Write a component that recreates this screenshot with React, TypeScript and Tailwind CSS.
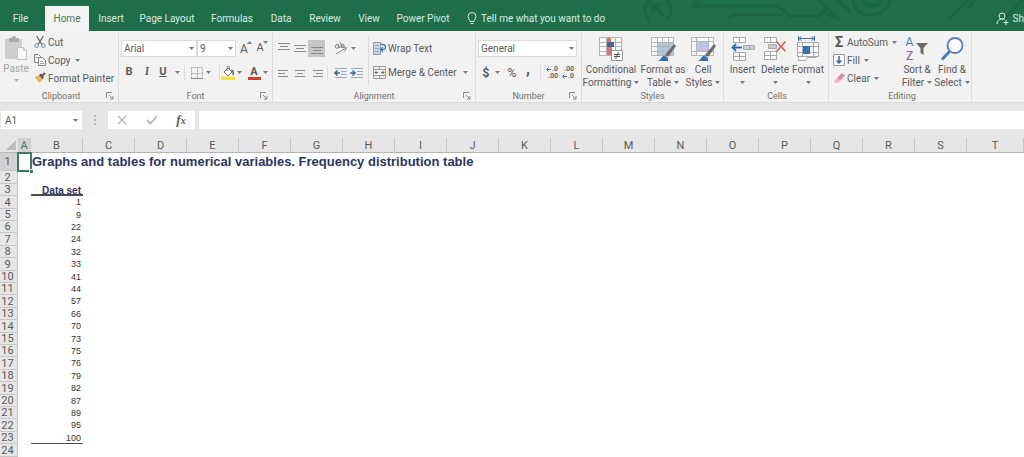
import type { ReactNode } from "react";

const TABS = [
  { name: "File", width: "w-[45px] pr-1" },
  { name: "Home", width: "w-11" },
  { name: "Insert", width: "w-11" },
  { name: "Page Layout", width: "w-[68px]" },
  { name: "Formulas", width: "w-[62px]" },
  { name: "Data", width: "w-9" },
  { name: "Review", width: "w-[52px]" },
  { name: "View", width: "w-9" },
  { name: "Power Pivot", width: "w-[72px]" },
];

const COLUMNS = "ABCDEFGHIJKLMNOPQRST".split("");
const DATA_SET = [1, 9, 22, 24, 32, 33, 41, 44, 57, 66, 70, 73, 75, 76, 79, 82, 87, 89, 95, 100];
const TITLE = "Graphs and tables for numerical variables. Frequency distribution table";

function Caret({ className = "" }: { className?: string }) {
  return (
    <svg viewBox="0 0 5 3" className={`h-[3px] w-[5px] shrink-0 ${className}`} aria-hidden="true">
      <path d="M0 0h5L2.5 3z" fill="#777" />
    </svg>
  );
}

function Divider({ className = "h-4" }: { className?: string }) {
  return <span className={`w-px shrink-0 bg-[#dcdcdc] ${className}`} />;
}

function Group({
  label,
  width,
  launcher = false,
  children,
}: {
  label: string;
  width: string;
  launcher?: boolean;
  children: ReactNode;
}) {
  return (
    <section
      aria-label={label}
      className={`relative flex h-full shrink-0 flex-col border-r border-[#dcdcdc] ${width}`}
    >
      <div className="flex min-h-0 flex-1">{children}</div>
      <div className="h-3 text-center text-[9px] leading-3 text-[#707070]">{label}</div>
      {launcher && (
        <button aria-label={`${label} settings`} className="absolute right-1 bottom-[2px]">
          <svg viewBox="0 0 8 8" className="h-2 w-2" fill="none" stroke="#8a8a8a">
            <path d="M.5 6V.5H6M3 3l4 4M7 4v3H4" />
          </svg>
        </button>
      )}
    </section>
  );
}

function IconButton({ label, children, className = "w-4" }: { label: string; children: ReactNode; className?: string }) {
  return (
    <button aria-label={label} className={`flex h-[17px] shrink-0 items-center justify-center ${className}`}>
      {children}
    </button>
  );
}

function Lines({ d }: { d: string }) {
  return (
    <svg viewBox="0 0 12 12" className="h-3 w-3" stroke="#8a8a8a">
      <path d={d} />
    </svg>
  );
}

function LargeButton({ icon, lines, width }: { icon: ReactNode; lines: string[]; width: string }) {
  return (
    <button className={`flex shrink-0 flex-col items-center pt-[2px] text-[10px] leading-[13px] whitespace-nowrap ${width}`}>
      <span className="flex h-7 items-center">{icon}</span>
      <span>{lines[0]}</span>
      <span className="flex h-[13px] items-center gap-[3px]">
        {lines[1]}
        <Caret />
      </span>
    </button>
  );
}

function SmallButton({ icon, label, caret = false }: { icon: ReactNode; label: string; caret?: boolean }) {
  return (
    <button className="flex h-[18px] items-center gap-[2px] text-[10px] whitespace-nowrap">
      <span className="flex w-3 justify-center">{icon}</span>
      {label}
      {caret && <Caret className="ml-[2px]" />}
    </button>
  );
}

function PasteIcon() {
  return (
    <svg viewBox="0 0 24 26" className="h-[26px] w-6">
      <path d="M1 4h17v20H1z" fill="#cfcdd0" />
      <path d="M5 7V3h3a2 2 0 0 1 4 0h3v4z" fill="#aaa" />
      <path d="M13.5 12.5h6l3 3v9h-9z" fill="#f7f7f7" stroke="#c4c4c4" />
      <path d="M19.5 12.5v3h3" fill="none" stroke="#c4c4c4" />
    </svg>
  );
}

function ScissorsIcon() {
  return (
    <svg viewBox="0 0 12 12" className="h-3 w-3" fill="none">
      <path d="M2.5 0 8 8.5M9.5 0 4 8.5" stroke="#666" strokeWidth="1.3" />
      <circle cx="2.7" cy="9.6" r="1.8" stroke="#5c8ba8" />
      <circle cx="9.3" cy="9.6" r="1.8" stroke="#5c8ba8" />
    </svg>
  );
}

function CopyIcon() {
  return (
    <svg viewBox="0 0 12 12" className="h-3 w-3" fill="#f7f7f7" stroke="#808080">
      <path d="M.5.5h4l2 2v6h-6z" />
      <path d="M4.5 3.5h4l3 3v5h-7z" />
      <path d="M6 7.5h3M6 9.5h4M2 3.5h2" stroke="#8fa6bd" />
    </svg>
  );
}

function BrushIcon() {
  return (
    <svg viewBox="0 0 12 12" className="h-3 w-3">
      <path d="M1 5 6 3l3 4-4 4z" fill="#e8b45a" />
      <path d="m5 3 2-1.5 3 4L8.5 7z" fill="#555" />
      <path d="m8 4 3-3" stroke="#555" strokeWidth="2" />
    </svg>
  );
}

function BordersIcon() {
  return (
    <svg viewBox="0 0 12 12" className="h-3 w-3" fill="none">
      <path d="M.5.5h11v11H.5zM6.5.5v11M.5 6.5h11" stroke="#aaa" strokeDasharray="2 1" />
      <path d="M0 11.5h12" stroke="#888" />
    </svg>
  );
}

function FillColorIcon() {
  return (
    <svg viewBox="0 0 14 14" className="h-[14px] w-[14px]">
      <path d="m3 6 4-4 4 4-4 4z" fill="#fff" stroke="#777" />
      <path d="M6 5V1.5a1.2 1.2 0 0 1 2.4 0V4" fill="none" stroke="#777" />
      <path d="M10.5 4c2 1 2 3 1.5 5" fill="none" stroke="#4f6f8f" strokeWidth="1.6" />
      <path d="M0 10.5h14V14H0z" fill="#f2e343" />
    </svg>
  );
}

function FontSizeIcon({ down = false }: { down?: boolean }) {
  return (
    <span className={`relative text-[#5a5a5a] ${down ? "text-[11px]" : "text-[12px]"}`}>
      A
      <svg viewBox="0 0 5 3" className="absolute top-px -right-1 h-[3px] w-[5px]" fill="#667f99">
        <path d={down ? "M0 0h5L2.5 3z" : "M0 3h5L2.5 0z"} />
      </svg>
    </span>
  );
}

function OrientationIcon() {
  return (
    <svg viewBox="0 0 14 13" className="h-[13px] w-[14px]" fill="none" stroke="#777">
      <circle cx="3" cy="4.5" r="1.8" />
      <path d="m3.500 2 2.500 4M6 .5l3 5" />
      <circle cx="8.500" cy="4" r="1.700" />
      <path d="M2 12 12 6M8.5 5.5l4 .2-2 3.800" stroke="#8a8a8a" />
    </svg>
  );
}

function IndentIcon({ increase = false }: { increase?: boolean }) {
  return (
    <svg viewBox="0 0 13 12" className="h-3 w-[13px]" fill="none">
      <path d="M1 1.5h12M7 4.5h6M7 7.5h6M1 10.5h12" stroke="#9ab" />
      <path
        d={increase ? "M0 6h5M2.5 3.5 5 6 2.5 8.5" : "M6 6H1M3.5 3.5 1 6l2.5 2.5"}
        stroke="#3b6ea5"
        strokeWidth="1.6"
      />
    </svg>
  );
}

function WrapIcon() {
  return (
    <svg viewBox="0 0 13 13" className="h-[13px] w-[13px]" fill="none">
      <path d="M.5.5h7v12h-7z" fill="#c6d9ea" stroke="#999" />
      <path d="M2 3.5h4M2 6.5h4M2 9.5h4" stroke="#8da6c0" />
      <path d="M8 2.5h2a2.5 2.5 0 0 1 0 5H8M10 5 7.5 7.5 10 10" stroke="#4678b0" strokeWidth="1.3" />
    </svg>
  );
}

function MergeIcon() {
  return (
    <svg viewBox="0 0 13 13" className="h-[13px] w-[13px]" fill="none">
      <path d="M.5.5h12v12H.5zM.5 3.5h12M.5 9.5h12M6.5.5v3M6.5 9.5v3" stroke="#999" />
      <path d="M2 6.5h3M8 6.5h3M3.5 5 2 6.5 3.5 8M9.5 5 11 6.5 9.5 8" stroke="#666" />
    </svg>
  );
}

function DecimalLabel({ increase = false }: { increase?: boolean }) {
  return (
    <span className="relative flex flex-col items-end text-[7px] leading-[7px] font-bold text-[#666]">
      <span>{increase ? ".0" : ".00"}</span>
      <span>{increase ? ".00" : ".0"}</span>
      <svg
        viewBox="0 0 5 5"
        className={`absolute -left-[2px] h-[5px] w-[5px] ${increase ? "top-px" : "bottom-px"}`}
        fill="none"
        stroke="#3b6ea5"
      >
        <path d="M5 2.5H1M2.5.5l-2 2 2 2" />
      </svg>
    </span>
  );
}

function ConditionalIcon() {
  return (
    <svg viewBox="0 0 26 26" className="h-[26px] w-[26px]" fill="none">
      <path d="M1.5 1.5h22v18h-22z" fill="#fafafa" />
      <path d="M1.5 1.5h22v18h-22zM8.5 1.5v18M17.5 1.5v18M1.5 6.5h22M1.5 10.5h22M1.5 15.5h22" stroke="#b4b4b4" />
      <path d="M9 2h4v4H9zM9 11h5v8H9z" fill="#d9746f" />
      <path d="M9 6h7v5H9z" fill="#45648a" />
      <path d="M13.5 14.5h11v10h-11z" fill="#fff" stroke="#999" />
      <path d="M16 18.5h6M16 20.5h6M20.5 16l-3 7" stroke="#555" />
    </svg>
  );
}

function StyleGridIcon({ cell = false }: { cell?: boolean }) {
  return (
    <svg viewBox="0 0 26 26" className="h-[26px] w-[26px]" fill="none">
      <path d="M1.5 1.5h22v18h-22z" fill="#fafafa" />
      {cell ? <path d="M6 6h13v9H6z" fill="#bcc3e6" /> : <path d="M7 6h16v13H7z" fill="#a9cbe6" />}
      <path
        d={
          cell
            ? "M1.5 1.5h22v18h-22zM6.5 1.5v18M18.5 1.5v18M1.5 5.5h22M1.5 15.5h22"
            : "M1.5 1.5h22v18h-22zM7.5 1.5v18M12.5 1.5v18M18.5 1.5v18M1.5 6.5h22M1.5 10.5h22M1.5 15.5h22"
        }
        stroke="#b4b4b4"
      />
      <path d="m15 19 9-11 2 2-8 11z" fill="#6b6b6b" />
      <path d="M7 25c4 0 4-5 7.5-5.5L18 22v3z" fill="#2f6fb5" />
    </svg>
  );
}

function InsertCellsIcon() {
  return (
    <svg viewBox="0 0 24 26" className="h-[26px] w-6" fill="none" stroke="#a8a8a8">
      <path d="M2.5 1.5h12v5h-12zM8.5 1.5v5M2.5 16.5h12v8h-12zM8.5 16.5v8M2.5 20.5h12" fill="#fafafa" />
      <path d="M12.5 9.5h11v4h-11zM18.5 9.5v4" fill="#c9cdd6" />
      <path d="M11 11.5H1.5M5 8l-3.5 3.5L5 15" stroke="#2f6ca8" strokeWidth="1.8" />
    </svg>
  );
}

function DeleteCellsIcon() {
  return (
    <svg viewBox="0 0 24 26" className="h-[26px] w-6" fill="none" stroke="#a8a8a8">
      <path d="M1.5 1.5h12v5h-12zM7.5 1.5v5M1.5 15.5h12v8h-12zM7.5 15.5v8M1.5 19.5h12" fill="#fafafa" />
      <path d="M5.5 8.5h8v4h-8z" fill="#c3c8d4" />
      <path d="m13.5 5.5 9 10M22.5 5.5l-9 10" stroke="#dc6353" strokeWidth="1.7" />
    </svg>
  );
}

function FormatCellsIcon() {
  return (
    <svg viewBox="0 0 24 26" className="h-[26px] w-6" fill="none" stroke="#a8a8a8">
      <path d="M3 2.5h15M5.5.5 3 2.5l2.5 2M15.5.5l2.5 2-2.5 2M2.5 0v5M18.5 0v5" stroke="#3d74b0" />
      <path d="M1.5 6.5h21v14h-21zM6.5 6.5v14M17.5 6.5v14M1.5 10.5h21M1.5 16.5h21M2.5 20.5v4h7l2-3h9" fill="#fafafa" />
      <path d="M7 10h7v8H7z" fill="#3673b5" stroke="none" />
    </svg>
  );
}

function FunnelIcon() {
  return (
    <svg viewBox="0 0 12 12" className="h-3 w-3">
      <path d="M0 0h12L7.5 5v7l-3-2V5z" fill="#6a6a6a" />
    </svg>
  );
}

function FindIcon() {
  return (
    <svg viewBox="0 0 24 26" className="h-[26px] w-6" fill="none">
      <path d="m9.500 15.500-7.500 8" stroke="#4a7ab8" strokeWidth="3" />
      <circle cx="15" cy="9.5" r="7.5" fill="#fafcff" stroke="#4f80bd" strokeWidth="1.8" />
    </svg>
  );
}

function FillIcon() {
  return (
    <svg viewBox="0 0 12 12" className="h-3 w-3" fill="none">
      <path d="M.5.5h11v11H.5z" fill="#fafafa" stroke="#999" />
      <path d="M6 2v7M3.5 6.5 6 9l2.5-2.5" stroke="#2f6ca8" strokeWidth="1.5" />
    </svg>
  );
}

function EraserIcon() {
  return (
    <svg viewBox="0 0 12 12" className="h-3 w-3">
      <path d="m4 6 5-5 3 2.5L7 9z" fill="#e28a9c" />
      <path d="m4 6 3 3-2 2H2L1 9z" fill="#f0b9c4" />
    </svg>
  );
}

// Faint circuit board pattern behind the title bar
function CircuitArt() {
  return (
    <svg
      viewBox="0 0 384 31"
      className="absolute top-0 right-0 h-[31px] w-96"
      fill="none"
      stroke="#1b6541"
      strokeWidth="3"
      aria-hidden="true"
    >
      <path d="M10 0c-8 7-6 15 0 20M26 0c8 7 6 15 0 20" />
      <path d="m13 5 10 11M13 13V5h8" />
      <circle cx="56" cy="5" r="2.5" fill="#1b6541" />
      <path d="M58 6h80l12 10h28l8-5M182 10l12 8" />
      <path d="M87 19l8-4h48M178 0l22 20M197 0l14 12" />
      <path d="M213 0c2 12 10 15 18 15s17-5 19-15M223 0c2 4 5 6 9 6s8-2 9-6" />
      <path d="m308 20 20-20M335 0l-8 9M363 20l20-20" />
    </svg>
  );
}

function TitleTabs() {
  return (
    <header className="relative flex h-[31px] items-end overflow-hidden bg-[#1e6e49] text-[10px] text-[#dcebe2]">
      <CircuitArt />
      <nav aria-label="Ribbon tabs" className="flex">
        {TABS.map(({ name, width }) => (
          <button
            key={name}
            aria-current={name === "Home" ? "true" : undefined}
            className={`h-[25px] text-center whitespace-nowrap ${width} ${
              name === "Home" ? "bg-[#f4f4f4] text-[#3f7a5c]" : ""
            }`}
          >
            {name}
          </button>
        ))}
      </nav>
      <button className="ml-2 flex h-[25px] items-center gap-1 whitespace-nowrap">
        <svg viewBox="0 0 10 13" className="h-[13px] w-[10px]" fill="none" stroke="#dcebe2">
          <path d="M3 9.5C3 7.5 1 7 1 4.5a4 4 0 0 1 8 0C9 7 7 7.5 7 9.5zM3.5 11.5h3" />
        </svg>
        Tell me what you want to do
      </button>
      <button aria-label="Share" className="relative ml-auto flex h-[25px] items-center gap-1">
        <svg viewBox="0 0 13 13" className="h-[13px] w-[13px]" fill="none" stroke="#dcebe2">
          <circle cx="6" cy="4" r="3" />
          <path d="M1 12c0-3 2-5 5-5 1.500 0 2.500.5 3 1M10 8v5M7.5 10.5h5" />
        </svg>
        Sh
      </button>
    </header>
  );
}

function Ribbon() {
  const box = "flex h-[17px] items-center justify-between border border-[#dadada] bg-white px-[2px] text-[10px]";
  return (
    <div className="flex h-[72px] overflow-hidden border-b border-[#dadada] bg-[#f2f2f2] pt-[2px] text-[#5a5a5a]">
      <Group label="Clipboard" width="w-[119px] pl-1" launcher>
        <button className="flex w-6 flex-col items-center pt-[2px] text-[10px] leading-3 text-[#a5a5a5]">
          <PasteIcon />
          <span className="pt-[2px]">Paste</span>
          <Caret className="mt-1 opacity-50" />
        </button>
        <div className="flex flex-col pl-[6px]">
          <SmallButton icon={<ScissorsIcon />} label="Cut" />
          <SmallButton icon={<CopyIcon />} label="Copy" caret />
          <SmallButton icon={<BrushIcon />} label="Format Painter" />
        </div>
      </Group>

      <Group label="Font" width="w-[154px]" launcher>
        <div className="flex flex-col gap-[7px] pt-[7px] pl-[2px]">
          <div className="flex items-center">
            <button aria-label="Font" className={`w-[76px] ${box}`}>
              Arial
              <Caret />
            </button>
            <button aria-label="Font size" className={`w-[39px] ${box}`}>
              9
              <Caret />
            </button>
            <IconButton label="Increase font size" className="ml-[2px] w-3"><FontSizeIcon /></IconButton>
            <IconButton label="Decrease font size" className="ml-1 w-3"><FontSizeIcon down /></IconButton>
          </div>
          <div className="flex items-center text-[11px]">
            <IconButton label="Bold"><b>B</b></IconButton>
            <IconButton label="Italic" className="ml-[2px] w-4"><b className="font-serif italic">I</b></IconButton>
            <IconButton label="Underline"><b className="underline">U</b></IconButton>
            <Caret className="ml-1" />
            <Divider className="ml-1 h-4" />
            <IconButton label="Borders" className="ml-1 w-4"><BordersIcon /></IconButton>
            <Caret className="ml-px" />
            <Divider className="ml-2 h-4" />
            <IconButton label="Fill color"><FillColorIcon /></IconButton>
            <Caret className="ml-px" />
            <IconButton label="Font color" className="ml-1 w-4">
              <span className="h-[14px] w-[13px] border-b-3 border-[#d8392b] text-center leading-[11px] font-bold">A</span>
            </IconButton>
            <Caret className="ml-px" />
          </div>
        </div>
      </Group>

      <Group label="Alignment" width="w-[203px]" launcher>
        <div className="flex flex-col gap-[7px] pt-[7px] pl-[3px]">
          <div className="flex items-center">
            <IconButton label="Top align"><Lines d="M0 .5h12M2 3.5h8M0 6.5h12" /></IconButton>
            <IconButton label="Middle align"><Lines d="M0 2.5h12M2 5.5h8M0 8.5h12" /></IconButton>
            <IconButton label="Bottom align" className="w-[17px] bg-[#c6c6c6]"><Lines d="M0 4.5h12M2 7.5h8M0 10.5h12" /></IconButton>
            <IconButton label="Orientation" className="ml-2 w-4"><OrientationIcon /></IconButton>
            <Caret className="ml-[2px]" />
          </div>
          <div className="flex items-center">
            <IconButton label="Align left"><Lines d="M0 3.5h10M0 6.5h7M0 9.5h10" /></IconButton>
            <IconButton label="Center"><Lines d="M1 3.5h10M3 6.5h6M1 9.5h10" /></IconButton>
            <IconButton label="Align right" className="w-[17px]"><Lines d="M2 3.5h10M5 6.5h7M2 9.5h10" /></IconButton>
            <Divider className="ml-[2px] h-4" />
            <IconButton label="Decrease indent" className="ml-1 w-4"><IndentIcon /></IconButton>
            <IconButton label="Increase indent"><IndentIcon increase /></IconButton>
          </div>
        </div>
        <Divider className="mt-1 ml-1 h-12" />
        <div className="flex flex-col gap-[7px] pt-[7px] pl-1 text-[10px] whitespace-nowrap">
          <button className="flex h-[17px] items-center gap-[2px]">
            <WrapIcon />
            Wrap Text
          </button>
          <button className="flex h-[17px] items-center gap-[2px]">
            <MergeIcon />
            Merge &amp; Center
            <Caret className="ml-1" />
          </button>
        </div>
      </Group>

      <Group label="Number" width="w-[106px]" launcher>
        <div className="flex flex-col gap-[7px] pt-[7px] pl-[2px]">
          <button aria-label="Number format" className={`w-[99px] ${box}`}>
            General
            <Caret />
          </button>
          <div className="flex items-center text-[12px]">
            <IconButton label="Currency"><b>$</b></IconButton>
            <Caret className="ml-px" />
            <IconButton label="Percent" className="ml-1 w-4">%</IconButton>
            <IconButton label="Comma style"><b className="pb-2 text-[16px]">,</b></IconButton>
            <Divider className="ml-1 h-4" />
            <IconButton label="Increase decimal" className="ml-1 w-4"><DecimalLabel increase /></IconButton>
            <IconButton label="Decrease decimal"><DecimalLabel /></IconButton>
          </div>
        </div>
      </Group>

      <Group label="Styles" width="w-[142px]">
        <LargeButton icon={<ConditionalIcon />} lines={["Conditional", "Formatting"]} width="w-[58px]" />
        <LargeButton icon={<StyleGridIcon />} lines={["Format as", "Table"]} width="w-[46px]" />
        <LargeButton icon={<StyleGridIcon cell />} lines={["Cell", "Styles"]} width="w-[34px]" />
      </Group>

      <Group label="Cells" width="w-[105px] pl-[2px]">
        <LargeButton icon={<InsertCellsIcon />} lines={["Insert", ""]} width="w-[33px]" />
        <LargeButton icon={<DeleteCellsIcon />} lines={["Delete", ""]} width="w-8" />
        <LargeButton icon={<FormatCellsIcon />} lines={["Format", ""]} width="w-[34px]" />
      </Group>

      <Group label="Editing" width="w-[143px] pl-1">
        <div className="flex w-[67px] flex-col">
          <SmallButton icon={<b className="text-[15px]">Σ</b>} label="AutoSum" caret />
          <SmallButton icon={<FillIcon />} label="Fill" caret />
          <SmallButton icon={<EraserIcon />} label="Clear" caret />
        </div>
        <LargeButton
          icon={
            <span className="flex items-center gap-[3px]">
              <span className="flex flex-col text-[12px] leading-[14px]">
                <span className="text-[#4a78b5]">A</span>
                <span className="text-[#8561b5]">Z</span>
              </span>
              <FunnelIcon />
            </span>
          }
          lines={["Sort &", "Filter"]}
          width="w-[34px]"
        />
        <LargeButton icon={<FindIcon />} lines={["Find &", "Select"]} width="w-9" />
      </Group>
    </div>
  );
}

function FormulaBar() {
  return (
    <div className="flex h-[26px] items-end bg-[#e6e6e6] pl-px text-[10px] text-[#5a5a5a]">
      <button aria-label="Name box" className="flex h-[18px] w-[81px] items-center justify-between bg-white px-1">
        A1
        <Caret />
      </button>
      <span className="flex h-[18px] w-[26px] flex-col items-center justify-center gap-[2px]">
        <i className="h-[2px] w-[2px] bg-[#bbb]" />
        <i className="h-[2px] w-[2px] bg-[#bbb]" />
        <i className="h-[2px] w-[2px] bg-[#bbb]" />
      </span>
      <div className="flex h-[18px] w-[87px] items-center justify-around bg-white">
        <button aria-label="Cancel">
          <svg viewBox="0 0 10 10" className="h-[10px] w-[10px]" stroke="#b5b5b5" strokeWidth="1.3">
            <path d="m1 1 8 8M9 1 1 9" />
          </svg>
        </button>
        <button aria-label="Enter">
          <svg viewBox="0 0 12 10" className="h-[10px] w-3" fill="none" stroke="#b5b5b5" strokeWidth="1.8">
            <path d="m1 5 3.500 3.500L11 1" />
          </svg>
        </button>
        <button aria-label="Insert function" className="font-['Liberation_Serif',serif] text-[13px] leading-4 font-bold italic">
          f<span className="text-[10px]">x</span>
        </button>
      </div>
      <input aria-label="Formula" className="ml-1 h-[18px] min-w-0 flex-1 bg-white px-1 outline-none" />
    </div>
  );
}

function ColumnHeader({ name }: { name: string }) {
  return (
    <th scope="col" className="h-6 border-b border-[#b5b5b5] bg-[#e6e6e6] p-0 align-bottom font-normal">
      <div
        className={`h-[14px] border-r border-[#c6c6c6] text-[11px] leading-4 ${
          name === "A" ? "bg-[#d2d2d2] text-[#3f7a5c]" : ""
        }`}
      >
        {name}
      </div>
    </th>
  );
}

function SheetRow({ row }: { row: number }) {
  const value = DATA_SET[row - 4];
  // Rows alternate between two heights so the scaled grid keeps an even pitch
  const height =
    row === 1 ? "h-[18px] leading-[18px]" : row % 5 === 2 || row % 5 === 4 ? "h-[13px] leading-[13px]" : "h-3 leading-3";
  const rule = row === 3 ? "shadow-[inset_0_-2px_#4a4a58]" : row === 23 ? "shadow-[inset_0_-1px_#4a4a58]" : "";
  return (
    <tr className={height}>
      <th
        scope="row"
        className={`border-r border-[#c6c6c6] p-0 pr-[2px] text-center text-[11px] font-normal text-[#5a5a5a] shadow-[inset_0_-1px_#c6c6c6] ${
          row === 1 ? "bg-[#d2d2d2]" : "bg-[#e6e6e6]"
        }`}
      >
        {row}
      </th>
      <td className={`relative p-0 ${row === 1 ? "outline-2 -outline-offset-1 outline-[#3f7a5c]" : ""}`}>
        {row === 1 && <i className="absolute -right-[2px] -bottom-[2px] h-1 w-1 border-t border-l border-white bg-[#3f7a5c]" />}
      </td>
      <td
        className={`p-0 text-right font-['Liberation_Sans',Arial,sans-serif] text-[9px] whitespace-nowrap text-[#333] ${rule}`}
      >
        {row === 1 && (
          <div className="flex w-0 pl-px text-[13px]">
            <strong className="text-[#2c3563]">{TITLE}</strong>
          </div>
        )}
        {row === 3 && <strong className="block pr-[2px] text-[10px] leading-[11px] text-[#2c3563]">Data set</strong>}
        {value !== undefined && <span className="block pr-[2px]">{value}</span>}
      </td>
      <td colSpan={18} className="p-0" />
    </tr>
  );
}

export default function App() {
  return (
    <div className="min-h-screen overflow-hidden bg-white font-[Roboto,'Open_Sans',sans-serif]">
      <TitleTabs />
      <Ribbon />
      <FormulaBar />
      <table className="w-full min-w-[1000px] table-fixed border-separate border-spacing-0">
        <colgroup>
          <col className="w-[18px]" />
          {COLUMNS.map((name) => (
            <col key={name} className={name === "A" ? "w-[13px]" : name === "T" ? "" : "w-[52px]"} />
          ))}
        </colgroup>
        <thead className="text-[#5a5a5a]">
          <tr>
            <td className="border-b border-[#b5b5b5] bg-[#e6e6e6] p-0 align-bottom">
              <svg viewBox="0 0 18 14" className="h-[14px] w-[18px]">
                <path d="M16 2v10H6z" fill="#bdbdbd" />
              </svg>
            </td>
            {COLUMNS.map((name) => (
              <ColumnHeader key={name} name={name} />
            ))}
          </tr>
        </thead>
        <tbody>
          {Array.from({ length: 24 }, (_, i) => (
            <SheetRow key={i} row={i + 1} />
          ))}
        </tbody>
      </table>
    </div>
  );
}
